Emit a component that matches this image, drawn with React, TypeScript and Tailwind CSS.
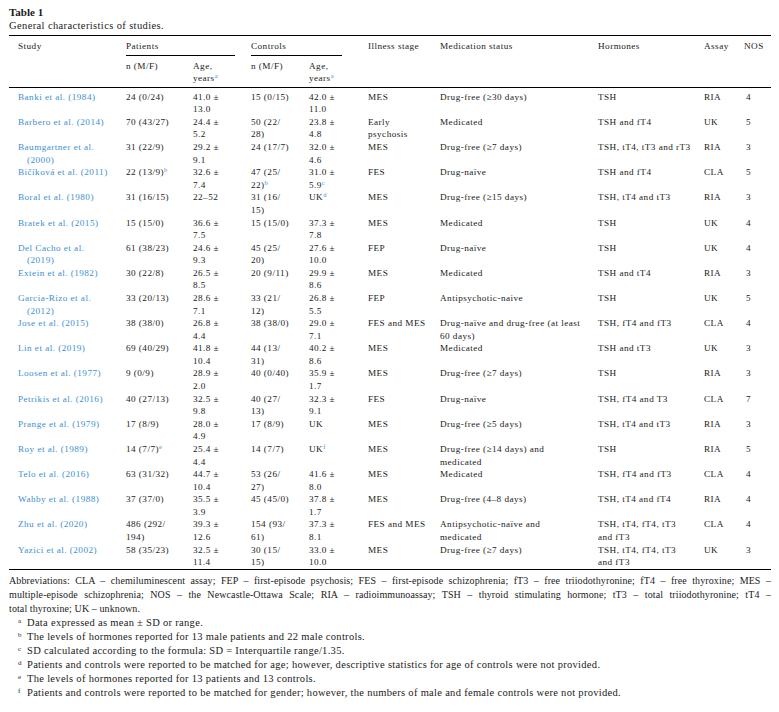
import React from "react";

type Cell = React.ReactNode;

const LINK = "text-[#3d8fd1]";

function Sup({ c, link = true }: { c: string; link?: boolean }) {
  return <sup className={`text-[6.5px] ${link ? LINK : "text-[#1a1a1a]"}`}>{c}</sup>;
}

function lines(...ls: React.ReactNode[]) {
  return ls.map((l, i) => (
    <React.Fragment key={i}>
      {i > 0 && <br />}
      {l}
    </React.Fragment>
  ));
}

// study, pn, page, cn, cage, illness, medication, hormones, assay, nos
const rows: Cell[][] = [
  [lines("Banki et al. (1984)"), "24 (0/24)", lines("41.0 ±", "13.0"), "15 (0/15)", lines("42.0 ±", "11.0"), "MES", "Drug-free (≥30 days)", "TSH", "RIA", "4"],
  [lines("Barbero et al. (2014)"), "70 (43/27)", lines("24.4 ±", "5.2"), lines("50 (22/", "28)"), lines("23.8 ±", "4.8"), lines("Early", "psychosis"), "Medicated", "TSH and fT4", "UK", "5"],
  [lines("Baumgartner et al.", "(2000)"), "31 (22/9)", lines("29.2 ±", "9.1"), "24 (17/7)", lines("32.0 ±", "4.6"), "MES", "Drug-free (≥7 days)", "TSH, tT4, tT3 and rT3", "RIA", "3"],
  [lines("Bičíková et al. (2011)"), <>22 (13/9)<Sup c="b" /></>, lines("32.6 ±", "7.4"), lines("47 (25/", <>22)<Sup c="b" /></>), lines("31.0 ±", <>5.9<Sup c="c" /></>), "FES", "Drug-naïve", "TSH and fT4", "CLA", "5"],
  [lines("Boral et al. (1980)"), "31 (16/15)", "22–52", lines("31 (16/", "15)"), <>UK<Sup c="d" /></>, "MES", "Drug-free (≥15 days)", "TSH, tT4 and tT3", "RIA", "3"],
  [lines("Bratek et al. (2015)"), "15 (15/0)", lines("36.6 ±", "7.5"), "15 (15/0)", lines("37.3 ±", "7.8"), "MES", "Medicated", "TSH", "UK", "4"],
  [lines("Del Cacho et al.", "(2019)"), "61 (38/23)", lines("24.6 ±", "9.3"), lines("45 (25/", "20)"), lines("27.6 ±", "10.0"), "FEP", "Drug-naïve", "TSH", "UK", "4"],
  [lines("Extein et al. (1982)"), "30 (22/8)", lines("26.5 ±", "8.5"), "20 (9/11)", lines("29.9 ±", "8.6"), "MES", "Medicated", "TSH and tT4", "RIA", "3"],
  [lines("Garcia-Rizo et al.", "(2012)"), "33 (20/13)", lines("28.6 ±", "7.1"), lines("33 (21/", "12)"), lines("26.8 ±", "5.5"), "FEP", "Antipsychotic-naive", "TSH", "UK", "5"],
  [lines("Jose et al. (2015)"), "38 (38/0)", lines("26.8 ±", "4.4"), "38 (38/0)", lines("29.0 ±", "7.1"), "FES and MES", lines("Drug-naïve and drug-free (at least", "60 days)"), "TSH, fT4 and fT3", "CLA", "4"],
  [lines("Lin et al. (2019)"), "69 (40/29)", lines("41.8 ±", "10.4"), lines("44 (13/", "31)"), lines("40.2 ±", "8.6"), "MES", "Medicated", "TSH and tT3", "UK", "3"],
  [lines("Loosen et al. (1977)"), "9 (0/9)", lines("28.9 ±", "2.0"), "40 (0/40)", lines("35.9 ±", "1.7"), "MES", "Drug-free (≥7 days)", "TSH", "RIA", "3"],
  [lines("Petrikis et al. (2016)"), "40 (27/13)", lines("32.5 ±", "9.8"), lines("40 (27/", "13)"), lines("32.3 ±", "9.1"), "FES", "Drug-naïve", "TSH, fT4 and T3", "CLA", "7"],
  [lines("Prange et al. (1979)"), "17 (8/9)", lines("28.0 ±", "4.9"), "17 (8/9)", "UK", "MES", "Drug-free (≥5 days)", "TSH, tT4 and tT3", "RIA", "3"],
  [lines("Roy et al. (1989)"), <>14 (7/7)<Sup c="e" /></>, lines("25.4 ±", "4.4"), "14 (7/7)", <>UK<Sup c="f" /></>, "MES", lines("Drug-free (≥14 days) and", "medicated"), "TSH", "RIA", "5"],
  [lines("Telo et al. (2016)"), "63 (31/32)", lines("44.7 ±", "10.4"), lines("53 (26/", "27)"), lines("41.6 ±", "8.0"), "MES", "Medicated", "TSH, fT4 and fT3", "CLA", "4"],
  [lines("Wahby et al. (1988)"), "37 (37/0)", lines("35.5 ±", "3.9"), "45 (45/0)", lines("37.8 ±", "1.7"), "MES", "Drug-free (4–8 days)", "TSH, tT4 and fT4", "RIA", "4"],
  [lines("Zhu et al. (2020)"), lines("486 (292/", "194)"), lines("39.3 ±", "12.6"), lines("154 (93/", "61)"), lines("37.3 ±", "8.1"), "FES and MES", lines("Antipsychotic-naïve and", "medicated"), lines("TSH, tT4, fT4, tT3", "and fT3"), "CLA", "4"],
  [lines("Yazici et al. (2002)"), "58 (35/23)", lines("32.5 ±", "11.4"), lines("30 (15/", "15)"), lines("33.0 ±", "10.0"), "MES", "Drug-free (≥7 days)", lines("TSH, tT4, fT4, tT3", "and fT3"), "UK", "3"],
];

const GRID =
  "grid grid-cols-[117px_67px_58px_58px_59px_72px_158px_106px_40px_27px]";

const footnotes: [string, string][] = [
  ["a", "Data expressed as mean ± SD or range."],
  ["b", "The levels of hormones reported for 13 male patients and 22 male controls."],
  ["c", "SD calculated according to the formula: SD = Interquartile range/1.35."],
  ["d", "Patients and controls were reported to be matched for age; however, descriptive statistics for age of controls were not provided."],
  ["e", "The levels of hormones reported for 13 patients and 13 controls."],
  ["f", "Patients and controls were reported to be matched for gender; however, the numbers of male and female controls were not provided."],
];

export default function App() {
  return (
    <div className="min-h-screen bg-white pl-[9px] pr-[8px] pt-[5px] font-['Liberation_Serif',serif] text-[#1a1a1a]">
      <div className="text-[11px] font-bold leading-[14px]">Table 1</div>
      <div className="text-[10.5px] leading-[14px] tracking-[0.38px]">General characteristics of studies.</div>

      {/* table */}
      <div className="mt-[2px] border-t-[1.5px] border-black text-[9.2px] leading-[12.58px] tracking-[0.45px]">
        {/* header */}
        <div className="border-b-[1.5px] border-black pb-[2px] pt-[4px]">
          <div className={GRID}>
            <div className="pl-[9px]">Study</div>
            <div className="col-span-2 mr-[16px] border-b border-black pb-[2px]">Patients</div>
            <div className="col-span-2 mr-[26px] border-b border-black pb-[2px]">Controls</div>
            <div>Illness stage</div>
            <div>Medication status</div>
            <div>Hormones</div>
            <div>Assay</div>
            <div>NOS</div>
          </div>
          <div className={`${GRID} pt-[4px]`}>
            <div />
            <div>n (M/F)</div>
            <div>
              Age,
              <br />
              years<Sup c="a" />
            </div>
            <div>n (M/F)</div>
            <div>
              Age,
              <br />
              years<Sup c="a" />
            </div>
          </div>
        </div>

        {/* body */}
        <div className="border-b-[1.5px] border-black pt-[3px]">
          {rows.map((r, i) => (
            <div key={i} className={GRID}>
              {r.map((c, j) => (
                <div
                  key={j}
                  className={
                    j === 0
                      ? `pl-[18px] [text-indent:-9px] ${LINK}`
                      : j === 9
                        ? "pl-[2px]"
                        : ""
                  }
                >
                  {c}
                </div>
              ))}
            </div>
          ))}
        </div>
      </div>

      {/* notes */}
      <div className="pt-[4px] text-[10px] leading-[14px] tracking-[0.1px]">
        <div className="text-justify [text-align-last:justify]">
          Abbreviations: CLA – chemiluminescent assay; FEP – first-episode psychosis; FES – first-episode schizophrenia; fT3 – free triiodothyronine; fT4 – free thyroxine; MES –
        </div>
        <div className="text-justify [text-align-last:justify]">
          multiple-episode schizophrenia; NOS – the Newcastle-Ottawa Scale; RIA – radioimmunoassay; TSH – thyroid stimulating hormone; tT3 – total triiodothyronine; tT4 –
        </div>
        <div>total thyroxine; UK – unknown.</div>
      </div>
      <div className="text-[10.5px] leading-[14px] tracking-[0.3px]">
        {footnotes.map(([k, t]) => (
          <div key={k} className="flex pl-[9px]">
            <span className="w-[9px] shrink-0 text-[7px] leading-[10px]">{k}</span>
            <span>{t}</span>
          </div>
        ))}
      </div>
    </div>
  );
}
